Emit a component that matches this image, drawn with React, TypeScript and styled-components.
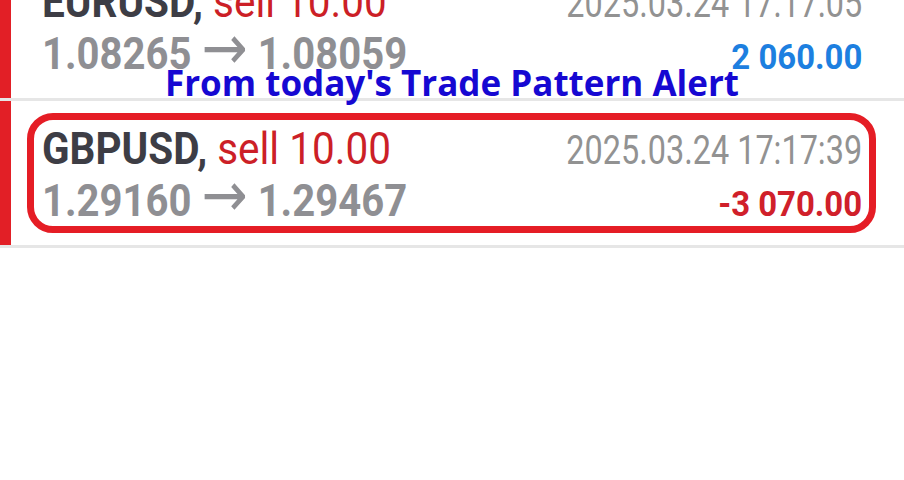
import styled, { createGlobalStyle } from 'styled-components';

const GlobalStyle = createGlobalStyle`
  html, body {
    margin: 0;
    padding: 0;
    background: #ffffff;
    font-family: Roboto, "Liberation Sans", sans-serif;
  }
`;

const List = styled.div`
  margin-top: -46px;
  display: flex;
  flex-direction: column;
`;

const Row = styled.div`
  position: relative;
  display: flex;
  height: 144px;
  border-bottom: 3px solid #e6e6e6;
`;

const Bar = styled.div`
  width: 11px;
  flex: none;
  background: #e21f26;
`;

const Card = styled.div<{ $highlight?: boolean }>`
  flex: 1;
  margin: 12px 28px 12px 16px;
  padding: 4px 7px 0 8px;
  border: 7px solid ${({ $highlight }) => ($highlight ? '#e51d25' : 'transparent')};
  border-radius: 26px;
`;

const Line = styled.div`
  display: flex;
  justify-content: space-between;
  align-items: baseline;
  height: 51px;
  line-height: 51px;
  white-space: nowrap;
`;

// squeezes Roboto towards the condensed face of the terminal
const Cond = styled.span<{ $right?: boolean; $scale: number }>`
  display: inline-block;
  transform: scaleX(${({ $scale }) => $scale});
  transform-origin: ${({ $right }) => ($right ? 'right' : 'left')} center;
`;

const Symbol = styled.span`
  font-size: 44px;
  font-weight: 700;
  color: #3d3d45;
`;

const Side = styled.span`
  font-size: 44px;
  font-weight: 400;
  color: #cc1f27;
`;

const Prices = styled.span`
  font-size: 45px;
  font-weight: 700;
  color: #8f8f93;
`;

const Arrow = styled.span`
  font-family: "DejaVu Sans", sans-serif;
  font-weight: 400;
  font-size: 62px;
  line-height: 0;
`;

const Time = styled.span`
  font-size: 40px;
  font-weight: 400;
  color: #929292;
`;

const Profit = styled.span<{ $loss?: boolean }>`
  font-size: 35px;
  font-weight: 700;
  color: ${({ $loss }) => ($loss ? '#d0202a' : '#1d7fe0')};
`;

const Caption = styled.div`
  position: absolute;
  left: 0;
  right: 0;
  bottom: -4px;
  text-align: center;
  font-family: "Open Sans", sans-serif;
  font-weight: 700;
  font-size: 35px;
  line-height: 38px;
  color: #1608d2;
`;

const trades = [
  {
    symbol: 'EURUSD',
    side: 'sell 10.00',
    open: '1.08265',
    close: '1.08059',
    time: '2025.03.24 17:17:05',
    profit: '2 060.00',
    loss: false,
    highlight: false,
    caption: "From today's Trade Pattern Alert",
  },
  {
    symbol: 'GBPUSD',
    side: 'sell 10.00',
    open: '1.29160',
    close: '1.29467',
    time: '2025.03.24 17:17:39',
    profit: '-3 070.00',
    loss: true,
    highlight: true,
    caption: '',
  },
];

export default function App() {
  return (
    <>
      <GlobalStyle />
      <List>
        {trades.map(t => (
          <Row key={t.symbol}>
            <Bar />
            <Card $highlight={t.highlight}>
              <Line>
                <Cond $scale={0.92}>
                  <Symbol>{t.symbol},</Symbol>
                  <Side>{'\u00a0'}{t.side}</Side>
                </Cond>
                <Cond $right $scale={0.81}>
                  <Time>{t.time}</Time>
                </Cond>
              </Line>
              <Line>
                <Cond $scale={0.89}>
                  <Prices>
                    {t.open} <Arrow>→</Arrow> {t.close}
                  </Prices>
                </Cond>
                <Cond $right $scale={0.94}>
                  <Profit $loss={t.loss}>{t.profit}</Profit>
                </Cond>
              </Line>
            </Card>
            {t.caption && <Caption>{t.caption}</Caption>}
          </Row>
        ))}
      </List>
    </>
  );
}
